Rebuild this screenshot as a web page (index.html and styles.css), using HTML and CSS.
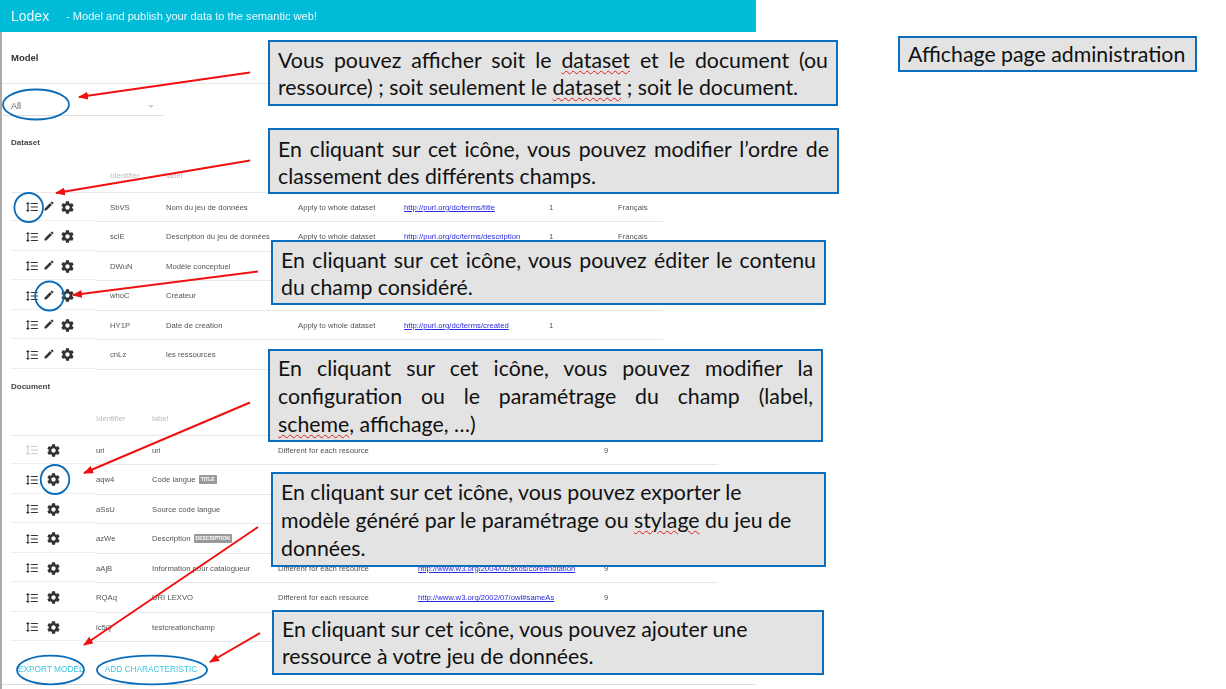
FILE: index.html
```html
<!DOCTYPE html>
<html lang="fr">
<head>
<meta charset="utf-8">
<title>Lodex - Affichage page administration</title>
<link rel="stylesheet" href="styles.css">
</head>
<body>
<svg class="defs" aria-hidden="true">
  <symbol id="i-order" viewBox="0 0 24 24"><path d="M6 7h2.5L5 3.5 1.5 7H4v10H1.5L5 20.5 8.5 17H6V7zm4-2v2h12V5H10zm0 14h12v-2H10v2zm0-6h12v-2H10v2z"/></symbol>
  <symbol id="i-edit" viewBox="0 0 24 24"><path d="M3 17.25V21h3.75L17.81 9.94l-3.75-3.75L3 17.25zM20.71 7.04c.39-.39.39-1.02 0-1.41l-2.34-2.34c-.39-.39-1.02-.39-1.41 0l-1.83 1.83 3.75 3.75 1.83-1.83z"/></symbol>
  <symbol id="i-gear" viewBox="0 0 24 24"><path d="M19.43 12.98c.04-.32.07-.64.07-.98s-.03-.66-.07-.98l2.11-1.65c.19-.15.24-.42.12-.64l-2-3.46c-.12-.22-.39-.3-.61-.22l-2.49 1c-.52-.4-1.08-.73-1.69-.98l-.38-2.65C14.46 2.18 14.25 2 14 2h-4c-.25 0-.46.18-.49.42l-.38 2.65c-.61.25-1.17.59-1.69.98l-2.49-1c-.23-.09-.49 0-.61.22l-2 3.46c-.13.22-.07.49.12.64l2.11 1.65c-.04.32-.07.65-.07.98s.03.66.07.98l-2.11 1.65c-.19.15-.24.42-.12.64l2 3.46c.12.22.39.3.61.22l2.49-1c.52.4 1.08.73 1.69.98l.38 2.65c.03.24.24.42.49.42h4c.25 0 .46-.18.49-.42l.38-2.65c.61-.25 1.17-.59 1.69-.98l2.49 1c.23.09.49 0 .61-.22l2-3.46c.12-.22.07-.49-.12-.64l-2.11-1.65zM12 15.5c-1.93 0-3.5-1.57-3.5-3.5s1.57-3.5 3.5-3.5 3.5 1.57 3.5 3.5-1.57 3.5-3.5 3.5z"/></symbol>
</svg>

<main class="app">
  <header class="topbar"><span class="brand">Lodex</span><span class="tagline">- Model and publish your data to the semantic web!</span></header>
  <h1 class="model-title">Model</h1>
  <div class="select"><span>All</span><span class="caret"></span></div>

  <h2 class="section-title">Dataset</h2>
  <section class="table dataset">
    <div class="row head"><span></span><span>Identifier</span><span>label</span></div>
    <div class="row">
      <div class="tools"><svg class="ic-order"><use href="#i-order"/></svg><svg class="ic-edit"><use href="#i-edit"/></svg><svg class="ic-gear"><use href="#i-gear"/></svg></div>
      <span>SbVS</span><span>Nom du jeu de données</span><span>Apply to whole dataset</span><a href="#">http://purl.org/dc/terms/title</a><span>1</span><span>Français</span>
    </div>
    <div class="row">
      <div class="tools"><svg class="ic-order"><use href="#i-order"/></svg><svg class="ic-edit"><use href="#i-edit"/></svg><svg class="ic-gear"><use href="#i-gear"/></svg></div>
      <span>sclE</span><span>Description du jeu de données</span><span>Apply to whole dataset</span><a href="#">http://purl.org/dc/terms/description</a><span>1</span><span>Français</span>
    </div>
    <div class="row">
      <div class="tools"><svg class="ic-order"><use href="#i-order"/></svg><svg class="ic-edit"><use href="#i-edit"/></svg><svg class="ic-gear"><use href="#i-gear"/></svg></div>
      <span>DWuN</span><span>Modèle conceptuel</span>
    </div>
    <div class="row">
      <div class="tools"><svg class="ic-order"><use href="#i-order"/></svg><svg class="ic-edit"><use href="#i-edit"/></svg><svg class="ic-gear"><use href="#i-gear"/></svg></div>
      <span>whoC</span><span>Créateur</span>
    </div>
    <div class="row">
      <div class="tools"><svg class="ic-order"><use href="#i-order"/></svg><svg class="ic-edit"><use href="#i-edit"/></svg><svg class="ic-gear"><use href="#i-gear"/></svg></div>
      <span>HY1P</span><span>Date de creation</span><span>Apply to whole dataset</span><a href="#">http://purl.org/dc/terms/created</a><span>1</span>
    </div>
    <div class="row">
      <div class="tools"><svg class="ic-order"><use href="#i-order"/></svg><svg class="ic-edit"><use href="#i-edit"/></svg><svg class="ic-gear"><use href="#i-gear"/></svg></div>
      <span>cnLz</span><span>les ressources</span>
    </div>
  </section>

  <h2 class="section-title doc-title">Document</h2>
  <section class="table document">
    <div class="row head"><span></span><span>Identifier</span><span>label</span></div>
    <div class="row">
      <div class="tools"><svg class="ic-order off"><use href="#i-order"/></svg><svg class="ic-gear"><use href="#i-gear"/></svg></div>
      <span>uri</span><span>uri</span><span>Different for each resource</span><span></span><span>9</span>
    </div>
    <div class="row">
      <div class="tools"><svg class="ic-order"><use href="#i-order"/></svg><svg class="ic-gear"><use href="#i-gear"/></svg></div>
      <span>aqw4</span><span>Code langue <b class="chip">TITLE</b></span>
    </div>
    <div class="row">
      <div class="tools"><svg class="ic-order"><use href="#i-order"/></svg><svg class="ic-gear"><use href="#i-gear"/></svg></div>
      <span>aSsU</span><span>Source code langue</span>
    </div>
    <div class="row">
      <div class="tools"><svg class="ic-order"><use href="#i-order"/></svg><svg class="ic-gear"><use href="#i-gear"/></svg></div>
      <span>azWe</span><span>Description <b class="chip">DESCRIPTION</b></span>
    </div>
    <div class="row">
      <div class="tools"><svg class="ic-order"><use href="#i-order"/></svg><svg class="ic-gear"><use href="#i-gear"/></svg></div>
      <span>aAjB</span><span>Information pour catalogueur</span><span>Different for each resource</span><a href="#">http://www.w3.org/2004/02/skos/core#notation</a><span>9</span>
    </div>
    <div class="row">
      <div class="tools"><svg class="ic-order"><use href="#i-order"/></svg><svg class="ic-gear"><use href="#i-gear"/></svg></div>
      <span>RQAq</span><span>URI LEXVO</span><span>Different for each resource</span><a href="#">http://www.w3.org/2002/07/owl#sameAs</a><span>9</span>
    </div>
    <div class="row">
      <div class="tools"><svg class="ic-order"><use href="#i-order"/></svg><svg class="ic-gear"><use href="#i-gear"/></svg></div>
      <span>ic5Q</span><span>testcreationchamp</span>
    </div>
  </section>

  <footer class="actions"><span class="btn">EXPORT MODEL</span><span class="btn">ADD CHARACTERISTIC</span></footer>
</main>

<svg class="marks" viewBox="0 0 1226 689" aria-hidden="true">
  <defs>
    <marker id="head" markerWidth="10" markerHeight="8" refX="9" refY="4" orient="auto" markerUnits="userSpaceOnUse"><path class="arrowhead" d="M0 0 10 4 0 8z"/></marker>
  </defs>
  <line class="arrow" x1="250" y1="72.5" x2="79" y2="97"/>
  <line class="arrow" x1="250" y1="160.5" x2="56" y2="193"/>
  <line class="arrow" x1="258" y1="271.5" x2="73" y2="295"/>
  <line class="arrow" x1="250" y1="402.5" x2="84" y2="473"/>
  <line class="arrow" x1="258" y1="527" x2="84" y2="645"/>
  <line class="arrow" x1="260" y1="633" x2="210" y2="662"/>
  <ellipse class="ring" cx="36" cy="104.5" rx="33" ry="15"/>
  <ellipse class="ring" cx="28.7" cy="207.5" rx="14.3" ry="14.5"/>
  <ellipse class="ring" cx="49.5" cy="296" rx="14.3" ry="14.5"/>
  <ellipse class="ring" cx="55" cy="479.5" rx="14.3" ry="14.5"/>
  <ellipse class="ring" cx="50.5" cy="670" rx="33.5" ry="14.3"/>
  <ellipse class="ring" cx="152" cy="670" rx="55" ry="14.3"/>
</svg>

<aside class="note n1">Vous pouvez afficher soit le <span class="sp">dataset</span> et le document (ou ressource) ; soit seulement le <span class="sp">dataset</span> ; soit le document.</aside>
<aside class="note n2">En cliquant sur cet icône, vous pouvez modifier l’ordre de classement des différents champs.</aside>
<aside class="note n3">En cliquant sur cet icône, vous pouvez éditer le contenu du champ considéré.</aside>
<aside class="note n4">En cliquant sur cet icône, vous pouvez modifier la configuration ou le paramétrage du champ (label, <span class="sp">scheme</span>, affichage, …)</aside>
<aside class="note n5 left">En cliquant sur cet icône, vous pouvez exporter le modèle généré par le paramétrage ou <span class="sp">stylage</span> du jeu de données.</aside>
<aside class="note n6 left">En cliquant sur cet icône, vous pouvez ajouter une ressource à votre jeu de données.</aside>
<aside class="note n7 left">Affichage page administration</aside>
</body>
</html>
```
FILE: styles.css
```css
* { box-sizing: border-box; }
html, body { margin: 0; padding: 0; background: #fff; }
body { position: relative; width: 1226px; height: 689px; overflow: hidden; font-family: "Liberation Sans", Arial, sans-serif; }
.defs { position: absolute; width: 0; height: 0; }

.app { width: 756px; height: 689px; border-left: 2px solid #a9a9a9; color: #555; font-size: 7.7px; filter: blur(0.35px); }
.topbar { height: 32px; margin-left: -2px; background: #00bcd8; color: #e8fbff; display: flex; align-items: center; padding-left: 11px; }
.brand { font-size: 14px; width: 55px; }
.tagline { font-size: 11.1px; }
.model-title { margin: 0; height: 52px; padding-top: 20px; border-bottom: 1px solid #e6e6e6; padding-left: 9px; font-size: 9.5px; line-height: 12px; color: #333; font-weight: bold; }
.select { width: 160px; height: 32px; margin-left: 1px; padding: 17px 0 0 8px; border-bottom: 1px solid #e0e0e0; position: relative; font-size: 9px; line-height: 11px; color: #666; }
.caret { position: absolute; left: 145px; top: 21px; border: 3px solid transparent; border-top: 3px solid #ccc; }
.section-title { margin: 0; height: 32px; padding: 21px 0 0 9px; font-size: 8px; line-height: 11px; color: #444; font-weight: bold; }
.doc-title { height: 15px; padding-top: 11px; }

.table { margin-left: 9px; }
.row { display: grid; height: 29.5px; align-items: center; position: relative; }
.row::after { content: ""; position: absolute; left: 85px; right: 0; bottom: 0; border-bottom: 1px solid #e8e8e8; }
.row::before { content: ""; position: absolute; left: 0; width: 85px; bottom: 1px; border-bottom: 1px solid #eee; }
.row.head { color: #bbb; }
.row.head::after, .row.head::before { left: 0; right: 0; width: auto; bottom: 0; }
.row > span, .row > a { white-space: nowrap; }
.dataset { width: 652px; }
.dataset .row { grid-template-columns: 99px 56px 132px 106px 145px 69px 1fr; }
.document { width: 707px; }
.document .row { grid-template-columns: 85px 56px 126px 140px 186px 1fr; }
.document .row.head { height: 51px; padding-top: 17px; }
.dataset .row.head { height: 44.5px; padding-top: 10px; }
.row a { color: #2a2ae0; text-decoration: underline; }

.tools { display: flex; align-items: center; padding-left: 14px; color: #333; }
.tools svg { fill: currentColor; flex: none; }
.ic-order { width: 14px; height: 14px; }
.ic-order.off { fill: #ccc; color: #ccc; }
.ic-edit { width: 12px; height: 12px; margin-left: 4px; margin-top: -2px; }
.ic-gear { width: 15px; height: 15px; margin-left: 5px; }
.document .ic-gear { margin-left: 7px; }

.chip { display: inline-block; background: #999; color: #fff; font-size: 5px; line-height: 9px; padding: 0 2px; border-radius: 1px; margin-left: 1px; vertical-align: middle; }

.actions { height: 43px; display: flex; align-items: center; padding: 12px 0 0 16px; gap: 21px; border-bottom: 1px solid #ddd; color: #3cc6de; font-size: 8.3px; }

.marks { position: absolute; left: 0; top: 0; width: 1226px; height: 689px; }
.arrow { stroke: #f01010; stroke-width: 2; marker-end: url(#head); }
.arrowhead { fill: #f01010; }
.ring { fill: none; stroke: #0b6cb8; stroke-width: 1.8; }

.note { position: absolute; background: #e3e3e3; border: 2px solid #0a6ebd; color: #111; font-family: Lato, "Open Sans", sans-serif; font-size: 21.3px; line-height: 27px; padding: 5px 8px; text-align: justify; }
.note.left { text-align: left; }
.sp { text-decoration: underline wavy #e02020 1px; text-underline-offset: 2px; }
.n1 { left: 268px; top: 40px; width: 570px; height: 66px; }
.n2 { left: 268px; top: 128px; width: 571px; height: 66px; padding-top: 6px; }
.n3 { left: 271px; top: 240px; width: 555px; height: 65px; }
.n4 { left: 268px; top: 349px; width: 555px; height: 93px; line-height: 28px; padding-top: 3px; }
.n5 { left: 271px; top: 472px; width: 555px; height: 95px; line-height: 28px; padding-top: 4px; }
.n6 { left: 272px; top: 610px; width: 552px; height: 65px; padding-top: 4px; }
.n7 { left: 898px; top: 36px; width: 299px; height: 36px; line-height: 33px; padding: 0 8px; }
```
